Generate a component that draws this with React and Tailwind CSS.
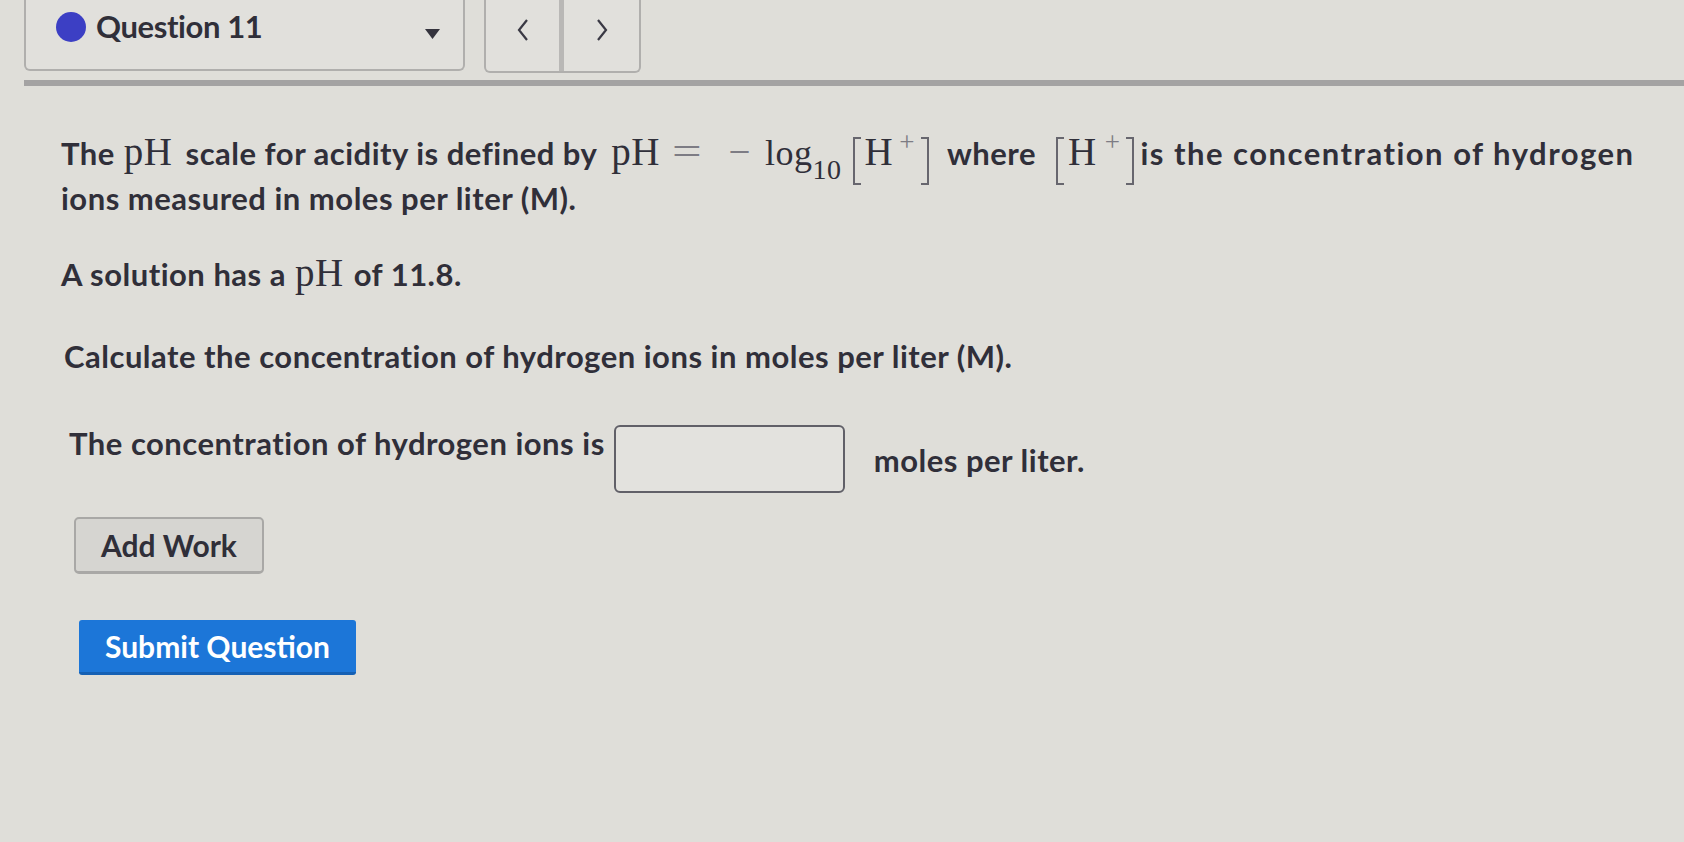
export default function App() {
  const serif = "font-['Liberation_Serif','DejaVu_Serif',serif] font-normal leading-[0]";

  const Bracket = ({ side }) => (
    <span
      className={
        "inline-block h-[48px] w-[8px] -my-[12px] align-[-8px] border-y-[2.5px] border-[#67666e] " +
        (side === "l" ? "border-l-[2.5px]" : "border-r-[2.5px]")
      }
    />
  );

  const HPlus = ({ wide }) => (
    <span className="inline-block leading-[0]">
      <Bracket side="l" />
      <span className={serif + " ml-[4px] text-[39px]"}>H</span>
      <span
        className={
          serif +
          " align-[14px] text-[27px] text-[#7d7c84] " +
          (wide ? "ml-[8px] mr-[6px]" : "ml-[6px] mr-[6px]")
        }
      >
        +
      </span>
      <Bracket side="r" />
    </span>
  );

  return (
    <div className="h-[842px] w-full overflow-hidden bg-[#dfded9] text-[#302f39] font-['Lato','Open_Sans',sans-serif]">
      <div className="flex items-start pl-[24px]">
        <div className="flex h-[71px] w-[441px] items-center rounded-b-md border-x-2 border-b-2 border-[#b0afad] bg-[#e1e0dc] pb-[16px] pl-[30px] pr-[22px]">
          <span className="h-[30px] w-[30px] rounded-full bg-[#3c3fc4]" />
          <span className="ml-[10px] text-[31px] font-bold tracking-[-0.4px]">Question 11</span>
          <svg className="ml-auto mt-[14px]" width="17" height="12" viewBox="0 0 17 12">
            <path d="M1 1 L16 1 L8.5 11 Z" fill="#34333d" />
          </svg>
        </div>
        <div className="ml-[19px] flex h-[73px] w-[157px] rounded-b-md border-x-2 border-b-2 border-[#b0afad] bg-[#e1e0dc]">
          <div className="flex w-[78px] items-center justify-center border-r-[5px] border-[#b9b8b6] pb-[12px]">
            <svg width="14" height="24" viewBox="0 0 14 24" fill="none" stroke="#3a3944" strokeWidth="2.2">
              <path d="M11 2 L3 12 L11 22" />
            </svg>
          </div>
          <div className="flex flex-1 items-center justify-center pb-[12px]">
            <svg width="14" height="24" viewBox="0 0 14 24" fill="none" stroke="#3a3944" strokeWidth="2.2">
              <path d="M3 2 L11 12 L3 22" />
            </svg>
          </div>
        </div>
      </div>
      <div className="ml-[24px] mt-[7px] h-[6px] bg-[#a4a3a3]" />

      <div className="pl-[61px] pt-[45px] text-[31px] font-bold tracking-[0.5px]">
        <p className="leading-[45px]">
          The<span className={serif + " ml-[9px] mr-[13px] text-[39px]"}>pH</span>scale for acidity is defined by
          <span className={serif + " ml-[14px] text-[39px]"}>pH</span>
          <span className={serif + " ml-[16px] inline-block scale-x-[1.35] text-[39px] text-[#7d7c84]"}>=</span>
          <span className={serif + " ml-[30px] text-[39px] text-[#7d7c84]"}>−</span>
          <span className={serif + " ml-[14px] text-[36px]"}>log</span>
          <span className={serif + " align-[-14px] text-[28px]"}>10</span>
          <span className="ml-[11px]">
            <HPlus />
          </span>
          <span className="ml-[18px]">where</span>
          <span className="ml-[20px]">
            <HPlus wide />
          </span>
          <span className="ml-[6px] tracking-[1.5px]">is the concentration of hydrogen</span>
          <br />
          ions measured in moles per liter (M).
        </p>
        <p className="mt-[31px] leading-[45px]">
          A solution has a<span className={serif + " ml-[9px] mr-[10px] text-[39px]"}>pH</span>of 11.8.
        </p>
        <p className="mt-[37px] pl-[3px] leading-[45px]">
          Calculate the concentration of hydrogen ions in moles per liter (M).
        </p>
        <div className="mt-[42px] flex items-start pl-[8px]">
          <span className="leading-[45px]">The concentration of hydrogen ions is</span>
          <div className="ml-[9px] mt-[4px] h-[68px] w-[231px] rounded-[6px] border-[2.5px] border-[#616068] bg-[#e3e2de]" />
          <span className="ml-[29px] mt-[17px] leading-[45px]">moles per liter.</span>
        </div>
        <button className="ml-[13px] mt-[24px] block h-[57px] w-[190px] rounded-[5px] border-2 border-b-[3px] border-[#a9a8a6] bg-[#d6d5d1] text-[30px] font-bold tracking-[0px] text-[#302f39]">
          Add Work
        </button>
        <button className="ml-[18px] mt-[46px] block h-[55px] w-[277px] rounded-[3px] border-b-[3px] border-[#1560b4] bg-[#1c76d8] text-[30px] font-bold tracking-[0px] text-white">
          Submit Question
        </button>
      </div>
    </div>
  );
}
